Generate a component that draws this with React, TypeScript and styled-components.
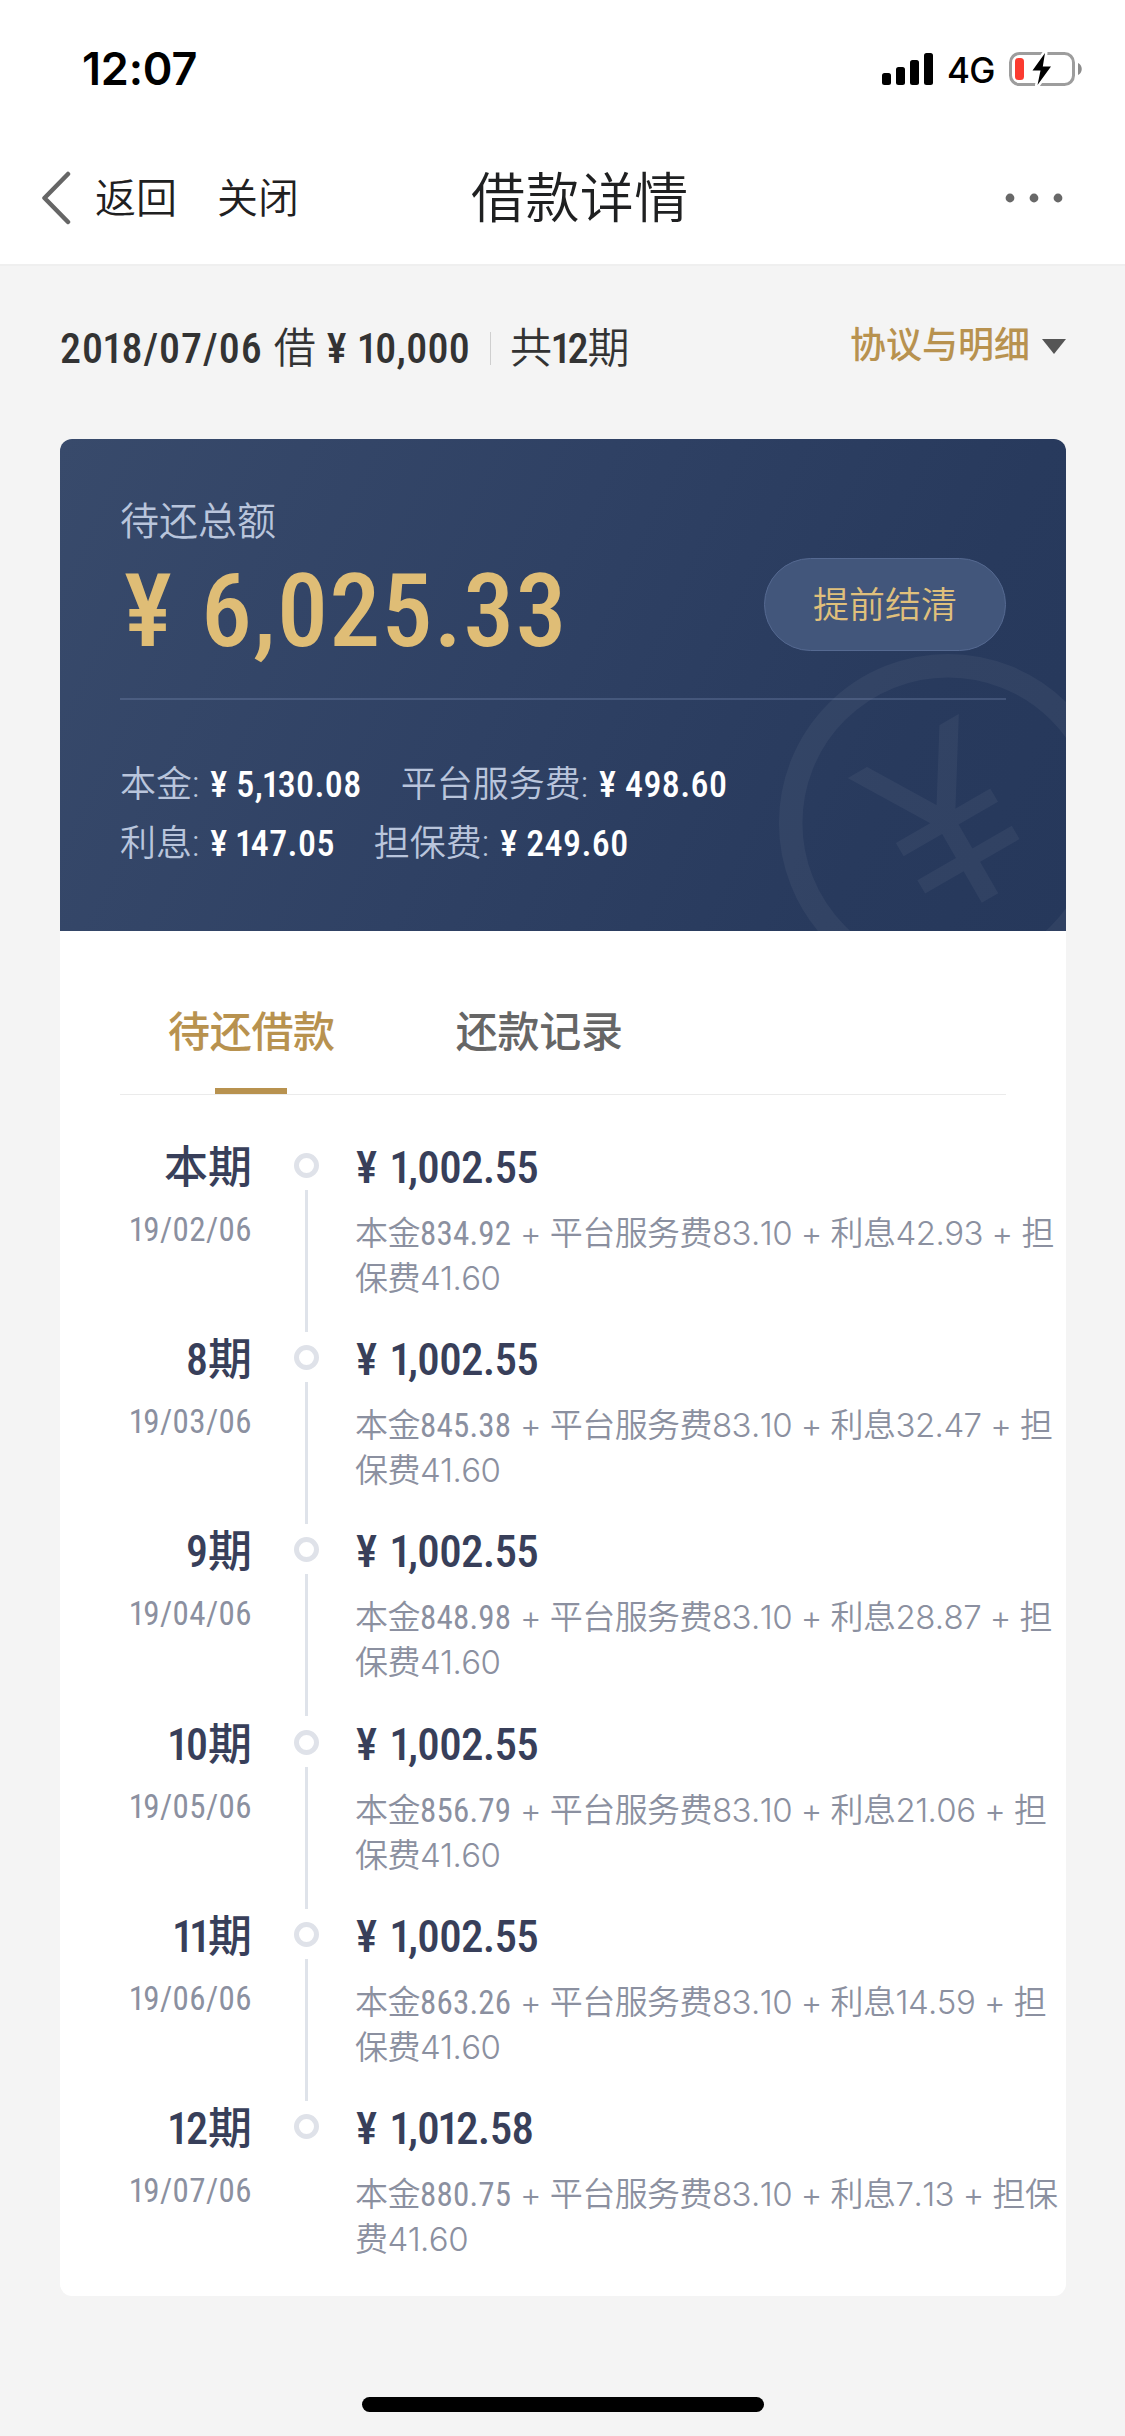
import React from "react";
import styled, { createGlobalStyle } from "styled-components";

const cjk = `"Noto Sans CJK SC", sans-serif`;
const textFont = `Roboto, ${cjk}`;
const dinFont = `"Roboto Condensed", Roboto, ${cjk}`;

const gold = "#b8924f";
const navy = "#383f5a";
const slate = "#8b90a0";

const GlobalStyle = createGlobalStyle`
  * { box-sizing: border-box; }
  body {
    margin: 0;
    background: #f4f4f4;
    font-family: ${textFont};
    font-weight: 350;
    font-kerning: none;
  }
`;

const Screen = styled.div`
  width: 1125px;
  height: 2436px;
  display: flex;
  flex-direction: column;
  background: #f4f4f4;
  overflow: hidden;
`;

const StatusBar = styled.header`
  height: 132px;
  padding: 6px 42px 0 82px;
  display: flex;
  align-items: center;
  justify-content: space-between;
  background: #fff;
`;

const Clock = styled.span`
  font: 600 45px/50px Inter, sans-serif;
  letter-spacing: -0.2px;
  color: #000;
`;

const StatusIcons = styled.div`
  display: flex;
  align-items: center;
`;

const Network = styled.span`
  width: 74px;
  flex: none;
  padding: 1px 0 0 13px;
  font: 450 35px/40px Inter, sans-serif;
  letter-spacing: -0.6px;
  color: #000;
`;

const NavBar = styled.nav`
  height: 132px;
  padding: 0 62px 0 41px;
  display: grid;
  grid-template-columns: 430px 1fr auto;
  align-items: center;
  background: #fff;
  color: #1f2021;
`;

const NavLeft = styled.div`
  display: flex;
  align-items: center;
`;

const NavLink = styled.span<{ $gap: number }>`
  padding-top: 2px;
  margin-left: ${(p) => p.$gap}px;
  font-size: 41px;
  line-height: 60px;
`;

const Title = styled.h1`
  margin: 0;
  padding-top: 4px;
  font-size: 54px;
  line-height: 70px;
  letter-spacing: 0.4px;
  font-weight: 350;
`;

const Summary = styled.section`
  height: 175px;
  padding: 0 59px 8px 60px;
  border-top: 2px solid #efefef;
  display: flex;
  align-items: center;
  justify-content: space-between;
`;

const SummaryText = styled.div`
  display: flex;
  align-items: center;
  font-size: 42px;
  line-height: 60px;
  color: #333;
  white-space: pre;
`;

const Borrow = styled.span`
  margin-left: 11px;
`;

const Separator = styled.i`
  width: 1px;
  height: 33px;
  margin: 0 19px 0 20px;
  background: #cfcfcf;
`;

const Agreement = styled.div`
  display: flex;
  align-items: center;
  gap: 12px;
  font-size: 36px;
  line-height: 50px;
  font-weight: 500;
  color: ${gold};
  padding-bottom: 5px;
`;

const Num = styled.span<{ $ls?: number; $w?: number; $ml?: number }>`
  font-family: ${dinFont};
  font-weight: ${(p) => p.$w ?? 500};
  letter-spacing: ${(p) => p.$ls ?? 0}px;
  margin-left: ${(p) => p.$ml ?? 0}px;
`;

/* The figure one is set tighter than the other figures. */
const One = styled.span`
  margin-left: -0.04em;
  margin-right: -0.07em;
`;

const Card = styled.main`
  width: 1006px;
  height: 1857px;
  margin-left: 60px;
  border-radius: 12px;
  background: #fff;
  overflow: hidden;
`;

const Hero = styled.section`
  position: relative;
  height: 492px;
  padding: 56px 60px 0;
  background: linear-gradient(115deg, #384a6b 0%, #2f4164 45%, #283a5d 80%, #26385b 100%);
  color: #b9c5dc;
`;

const Watermark = styled.svg`
  position: absolute;
  left: 0;
  top: 0;
`;

const HeroLabel = styled.div`
  font-size: 39px;
  line-height: 54px;
`;

const HeroRow = styled.div`
  position: relative;
  height: 93px;
  margin-top: 9px;
  display: flex;
  align-items: center;
  justify-content: space-between;
`;

const Amount = styled.div`
  padding: 14px 0 0 4px;
  font-size: 102px;
  line-height: 93px;
  color: #dfbd76;
`;

const Payoff = styled.button`
  width: 242px;
  height: 93px;
  padding: 2px 0 0;
  border: 1px solid #556991;
  border-radius: 47px;
  background: #42567b;
  font: 350 36px/50px ${textFont};
  color: #e0c07b;
`;

const Rule = styled.hr`
  position: relative;
  height: 2px;
  margin: 47px 0 56px;
  border: 0;
  background: rgba(135, 155, 195, 0.27);
`;

const FeeRow = styled.div`
  position: relative;
  display: flex;
  font-size: 36px;
  line-height: 59px;
  white-space: pre;
`;

const Fee = styled.div`
  margin-right: 39px;
`;

const FeeNum = styled.span`
  margin-left: 2px;
  color: #fff;
`;

const Tabs = styled.div`
  height: 164px;
  margin: 0 60px;
  padding-left: 48px;
  border-bottom: 1px solid #ebebeb;
  display: flex;
  gap: 121px;
`;

const Tab = styled.div<{ $active?: boolean }>`
  padding-top: 72px;
  display: flex;
  flex-direction: column;
  align-items: center;
  font-size: 42px;
  line-height: 60px;
  font-weight: 500;
  letter-spacing: -0.3px;
  color: ${(p) => (p.$active ? gold : "#666")};

  &::after {
    content: "";
    width: 72px;
    height: 6px;
    margin-top: 25px;
    background: ${(p) => (p.$active ? gold : "transparent")};
  }
`;

const Timeline = styled.div`
  padding-top: 43px;
`;

const Entry = styled.div`
  height: 192.2px;
  display: grid;
  grid-template-columns: 192px 24px 1fr;
  column-gap: 39px;
`;

const Period = styled.div`
  text-align: right;
`;

const PeriodName = styled.div`
  font-size: 44px;
  line-height: 60px;
  font-weight: 500;
  color: ${navy};
`;

const PeriodDate = styled.div`
  margin-top: 9px;
  font-size: 33px;
  line-height: 45px;
  color: ${slate};
`;

const Axis = styled.div`
  margin-left: 3px;
  width: 24px;
  padding-top: 15px;
  display: flex;
  flex-direction: column;
  align-items: center;
`;

const Ring = styled.i`
  width: 25px;
  height: 25px;
  border: 5px solid #dfe2e9;
  border-radius: 50%;
`;

const Stem = styled.i`
  width: 3px;
  height: 142px;
  margin-top: 12px;
  background: #dfe3ea;
`;

const Due = styled.div`
  white-space: pre;
`;

const DueAmount = styled.div`
  padding-left: 2px;
  font-size: 45px;
  line-height: 60px;
  color: ${navy};
`;

const Breakdown = styled.div`
  margin-top: 13px;
  padding-left: 1px;
  font-size: 33px;
  line-height: 45px;
  color: ${slate};
`;

const Plain = styled.span`
  font-family: Inter, ${cjk};
  font-weight: 350;
  letter-spacing: -0.55px;
`;

const HomeBar = styled.div`
  width: 402px;
  height: 15px;
  margin: 101px 0 0 362px;
  border-radius: 8px;
  background: #000;
`;

type FiguresProps = { children: string; $ls?: number; $w?: number; $ml?: number };

const Figures = ({ children, ...style }: FiguresProps) => (
  <Num {...style}>
    {children.split(/(1)/).map((part, i) => (part === "1" ? <One key={i}>1</One> : part))}
  </Num>
);

const periods = [
  { name: "本", date: "19/02/06", total: "1,002.55", principal: "834.92", interest: "42.93", wrap: 1 },
  { name: "8", date: "19/03/06", total: "1,002.55", principal: "845.38", interest: "32.47", wrap: 1 },
  { name: "9", date: "19/04/06", total: "1,002.55", principal: "848.98", interest: "28.87", wrap: 1 },
  { name: "10", date: "19/05/06", total: "1,002.55", principal: "856.79", interest: "21.06", wrap: 1 },
  { name: "11", date: "19/06/06", total: "1,002.55", principal: "863.26", interest: "14.59", wrap: 1 },
  { name: "12", date: "19/07/06", total: "1,012.58", principal: "880.75", interest: "7.13", wrap: 2 },
];

const fees = [
  [
    { label: "本金", value: "5,130.08" },
    { label: "平台服务费", value: "498.60" },
  ],
  [
    { label: "利息", value: "147.05" },
    { label: "担保费", value: "249.60" },
  ],
];

const guarantee = "担保费";

const Signal = () => (
  <svg width="52" height="34" viewBox="0 0 52 34">
    <rect x="0" y="21" width="9" height="12" rx="2.5" />
    <rect x="14" y="15" width="9" height="18" rx="2.5" />
    <rect x="28" y="8" width="9" height="25" rx="2.5" />
    <rect x="42" y="1" width="9" height="32" rx="2.5" />
  </svg>
);

const Battery = () => (
  <svg width="75" height="36" viewBox="0 0 75 36">
    <rect x="2.5" y="2.5" width="63" height="31" rx="9" fill="none" stroke="#9d9d9d" strokeWidth="3" />
    <path d="M70 12c5 2 5 10 0 12z" fill="#8c8c8c" />
    <rect x="7" y="7" width="9" height="22" rx="3.5" fill="#fb3b30" />
    <path d="M37 2 24.500 19.500h8L29.500 34 43 15.500h-8.200z" fill="#000" stroke="#fff" strokeWidth="5" strokeLinejoin="round" paintOrder="stroke" />
  </svg>
);

const CoinMark = () => (
  <Watermark width="1006" height="492" viewBox="60 439 1006 492" fill="none" stroke="#fff">
    <clipPath id="coin-arms">
      <rect x="-90" y="-85" width="180" height="180" />
    </clipPath>
    <g opacity="0.045">
      <circle cx="948" cy="823" r="157.300" strokeWidth="23.500" />
      <g transform="translate(945 820) rotate(-30)" strokeWidth="19" clipPath="url(#coin-arms)">
        <path d="M-60-98 0 1 62-98M0-6V90" />
        <path d="M-54 3H55M-54 46H55" strokeWidth="15.500" />
      </g>
    </g>
  </Watermark>
);

export default function App() {
  return (
    <>
      <GlobalStyle />
      <Screen>
        <StatusBar>
          <Clock>12:07</Clock>
          <StatusIcons>
            <Signal />
            <Network>4G</Network>
            <Battery />
          </StatusIcons>
        </StatusBar>
        <NavBar>
          <NavLeft>
            <svg width="30" height="56" viewBox="0 0 30 56" fill="none" stroke="#666" strokeWidth="4.500" strokeLinecap="round" strokeLinejoin="round">
              <path d="M27 4 3.500 28 27 52" />
            </svg>
            <NavLink $gap={24}>返回</NavLink>
            <NavLink $gap={40}>关闭</NavLink>
          </NavLeft>
          <Title>借款详情</Title>
          <svg width="58" height="10" viewBox="0 0 58 10" fill="#686868">
            <circle cx="5" cy="5" r="4.400" />
            <circle cx="29" cy="5" r="4.400" />
            <circle cx="53" cy="5" r="4.400" />
          </svg>
        </NavBar>

        <Summary>
          <SummaryText>
            <Figures $ls={1}>2018/07/06</Figures>
            <Borrow>借</Borrow>
            <Figures $ml={11}>¥</Figures>
            <Figures $ml={12} $ls={0.3}>10,000</Figures>
            <Separator />
            共<Figures $ls={-1}>12</Figures>期
          </SummaryText>
          <Agreement>
            协议与明细
            <svg width="24" height="15" viewBox="0 0 24 15" fill="#555">
              <path d="M0 0h24L12 15z" />
            </svg>
          </Agreement>
        </Summary>

        <Card>
          <Hero>
            <CoinMark />
            <HeroLabel>待还总额</HeroLabel>
            <HeroRow>
              <Amount>
                <Figures>¥</Figures>
                <Figures $ml={29} $ls={1.2}>6,025.33</Figures>
              </Amount>
              <Payoff>提前结清</Payoff>
            </HeroRow>
            <Rule />
            {fees.map((row, i) => (
              <FeeRow key={i}>
                {row.map((fee) => (
                  <Fee key={fee.label}>
                    {fee.label}: <FeeNum><Figures $ls={0.4}>{`¥ ${fee.value}`}</Figures></FeeNum>
                  </Fee>
                ))}
              </FeeRow>
            ))}
          </Hero>

          <Tabs>
            <Tab $active>待还借款</Tab>
            <Tab>还款记录</Tab>
          </Tabs>

          <Timeline>
            {periods.map((p, i) => (
              <Entry key={p.date}>
                <Period>
                  <PeriodName><Figures>{p.name}</Figures>期</PeriodName>
                  <PeriodDate><Figures $w={400} $ls={0.4}>{p.date}</Figures></PeriodDate>
                </Period>
                <Axis>
                  <Ring />
                  {i < periods.length - 1 && <Stem />}
                </Axis>
                <Due>
                  <DueAmount><Figures>¥</Figures><Figures $ml={14} $ls={-0.7}>{p.total}</Figures></DueAmount>
                  <Breakdown>
                    <Plain>本金</Plain><Figures $w={400} $ls={0.2}>{p.principal}</Figures>
                    <Plain> + 平台服务费83.10 + 利息{p.interest} + {guarantee.slice(0, p.wrap)}</Plain>
                    <br />
                    <Plain>{guarantee.slice(p.wrap)}41.60</Plain>
                  </Breakdown>
                </Due>
              </Entry>
            ))}
          </Timeline>
        </Card>
        <HomeBar />
      </Screen>
    </>
  );
}
